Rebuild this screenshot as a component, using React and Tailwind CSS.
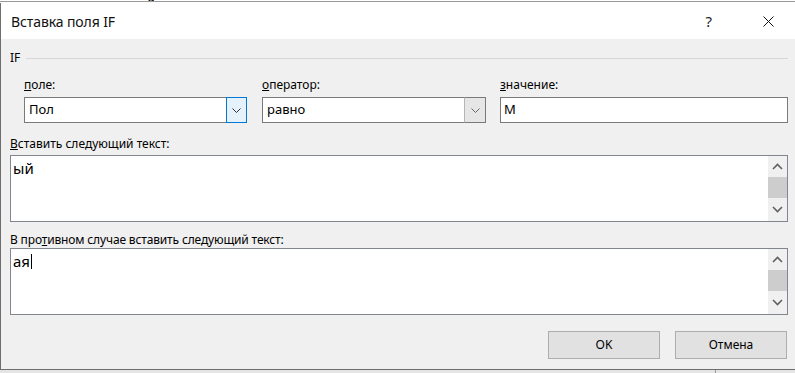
function Chevron({ up = false, className = '' }) {
  return (
    <svg width="9" height="5" viewBox="0 0 9 5" className={className}>
      <polyline
        points={up ? '0.5,4.5 4.5,0.5 8.5,4.5' : '0.5,0.5 4.5,4.5 8.5,0.5'}
        fill="none"
        stroke="currentColor"
        strokeWidth="1"
      />
    </svg>
  )
}

function ScrollArrow({ up = false }) {
  return (
    <svg width="11" height="7" viewBox="0 0 11 7">
      <polyline
        points={up ? '1,6 5.5,1.5 10,6' : '1,1 5.5,5.5 10,1'}
        fill="none"
        stroke="#606060"
        strokeWidth="1.6"
      />
    </svg>
  )
}

function Combo({ value, active = false }) {
  return (
    <div className="flex h-[26px]">
      <div className="flex flex-1 items-center border border-r-0 border-[#7a7a7a] bg-white pl-[4px] text-[13px] text-black">
        {value}
      </div>
      <div
        className={
          active
            ? 'flex w-[21px] items-center justify-center border border-[#0078d7] bg-[#e5f1fb] text-[#333]'
            : 'flex w-[22px] items-center justify-center border border-[#7a7a7a] border-l-[#b5b5b5] bg-[#e6e6e6] text-[#666]'
        }
      >
        <Chevron />
      </div>
    </div>
  )
}

function TextBox({ children }) {
  return (
    <div className="flex h-[67px] border border-[#82878f] bg-white">
      <div className="flex-1 pl-[2px] pt-[2px] text-[15px] leading-[20px] text-black">{children}</div>
      <div className="flex w-[19px] flex-col bg-[#f0f0f0]">
        <div className="flex h-[21px] items-center justify-center">
          <ScrollArrow up />
        </div>
        <div className="h-[21px] bg-[#cdcdcd]" />
        <div className="flex flex-1 items-center justify-center">
          <ScrollArrow />
        </div>
      </div>
    </div>
  )
}

export default function App() {
  return (
    <div className="flex h-[373px] w-[795px] flex-col overflow-hidden bg-white font-['Noto_Sans',sans-serif] text-black">
      <div className="relative h-[3px] overflow-hidden">
        <div className="ml-[130px] mt-[-27px] font-['Liberation_Serif',serif] text-[28px] leading-[28px]">
          Сумма оплаты, значит
        </div>
        <div className="absolute left-0 right-0 top-[1px] h-px bg-[#9a9a9a]" />
      </div>

      <div className="flex h-[367px] flex-col border-b border-l border-[#6e6e6e] bg-[#f0f0f0]">
        <div className="flex h-[36px] items-center bg-white pl-[10px]">
          <span className="text-[14px] tracking-[-0.1px] text-[#111]">Вставка поля IF</span>
          <span className="ml-auto text-[15px] text-[#222]">?</span>
          <svg width="11" height="11" viewBox="0 0 11 11" className="ml-[51px] mr-[21px]">
            <path d="M0.5 0.5 L10.5 10.5 M10.5 0.5 L0.5 10.5" stroke="#111" strokeWidth="1" />
          </svg>
        </div>

        <div className="flex flex-1 flex-col pl-[9px] pr-[7px] text-[12px]">
          <div className="mt-[12px] flex h-[14px] items-center">
            <span className="leading-[14px]">IF</span>
            <div className="ml-[6px] h-px flex-1 bg-[#d8d8d8]" />
          </div>

          <div className="mt-[12px] flex">
            <div className="ml-[14px] w-[223px]">
              <div className="h-[20px] leading-[15px]">
                <span className="underline">п</span>оле:
              </div>
              <Combo value="Пол" active />
            </div>
            <div className="ml-[15px] w-[224px]">
              <div className="h-[20px] leading-[15px]">
                <span className="underline">о</span>ператор:
              </div>
              <Combo value="равно" />
            </div>
            <div className="ml-[14px] flex-1">
              <div className="h-[20px] leading-[15px]">
                <span className="underline">з</span>начение:
              </div>
              <div className="flex h-[26px] items-center border border-[#7a7a7a] bg-white pl-[3px] text-[13px]">
                М
              </div>
            </div>
          </div>

          <div className="mt-[13px] h-[19px] leading-[15px]">
            <span className="underline">В</span>ставить следующий текст:
          </div>
          <TextBox>ый</TextBox>

          <div className="mt-[10px] h-[16px] leading-[15px] tracking-[-0.15px]">
            В про<span className="underline">т</span>ивном случае вставить следующий текст:
          </div>
          <TextBox>
            <span>ая</span>
            <span className="ml-px inline-block h-[15px] w-px translate-y-[2px] bg-black" />
          </TextBox>

          <div className="mt-[16px] flex justify-end gap-[15px] pr-px">
            <button className="h-[28px] w-[112px] border border-[#adadad] bg-[#e1e1e1] text-[12px]">OK</button>
            <button className="h-[28px] w-[112px] border border-[#adadad] bg-[#e1e1e1] text-[12px]">Отмена</button>
          </div>
        </div>
      </div>

      <div className="flex flex-1 bg-[#e4e4e4]">
        <div className="ml-[715px] w-px bg-[#9a9a9a]" />
      </div>
    </div>
  )
}
